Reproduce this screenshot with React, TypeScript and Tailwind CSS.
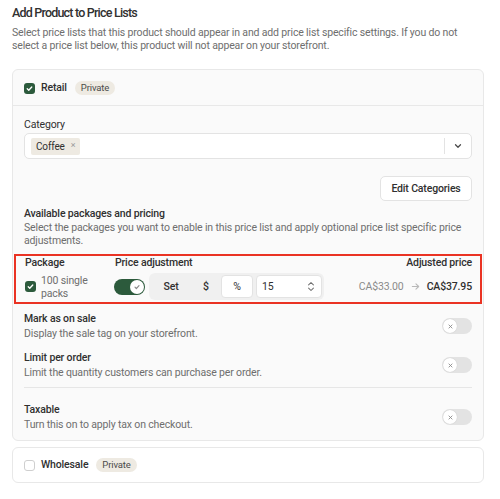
import React from 'react';

function Check({ className = '' }: { className?: string }) {
  return (
    <svg viewBox="0 0 12 12" className={className} fill="none" stroke="currentColor" strokeWidth={1.8} strokeLinecap="round" strokeLinejoin="round">
      <path d="M3 6.3l2 2 4-4.4" />
    </svg>
  );
}

function Checkbox({ checked }: { checked: boolean }) {
  return checked ? (
    <span className="flex h-[11px] w-[11px] shrink-0 items-center justify-center rounded-[3px] bg-[#2c5a3c] text-white">
      <Check className="h-[9px] w-[9px]" />
    </span>
  ) : (
    <span className="h-[11px] w-[11px] shrink-0 rounded-[3px] border border-[#cfcfcf] bg-white" />
  );
}

function Badge({ children }: { children: React.ReactNode }) {
  return (
    <span className="rounded-full bg-[#eeeae2] px-[6px] text-[9.5px] leading-[14px] text-[#4a4a4a]">{children}</span>
  );
}

function OffToggle() {
  return (
    <span className="flex h-[16px] w-[30px] shrink-0 items-center rounded-full bg-[#e3e3e3] p-[1px]">
      <span className="flex h-[14px] w-[14px] items-center justify-center rounded-full bg-white shadow-[0_0_1px_rgba(0,0,0,0.2)]">
        <svg viewBox="0 0 8 8" className="h-[5px] w-[5px]" stroke="#8a8a8a" strokeWidth={1.4} strokeLinecap="round">
          <path d="M1.5 1.5l5 5M6.5 1.5l-5 5" />
        </svg>
      </span>
    </span>
  );
}

function SettingRow({ title, desc, top }: { title: string; desc: string; top: string }) {
  return (
    <div className={`flex items-center justify-between ${top}`}>
      <div>
        <div className="font-medium leading-[13px] text-[#303030]">{title}</div>
        <div className="mt-[2px] leading-[13px] text-[#6e6e6e]">{desc}</div>
      </div>
      <OffToggle />
    </div>
  );
}

export default function App() {
  return (
    <div className="min-h-[499px] bg-white pl-[12px] pr-[16px] pt-[4px] text-[10.5px] tracking-[-0.15px] text-[#303030] [font-family:Roboto,'Noto_Sans',sans-serif]">
      <h2 className="text-[12.5px] font-medium leading-[18px] tracking-[-0.8px] text-[#303030]">Add Product to Price Lists</h2>
      <p className="mt-[4px] leading-[13px] text-[#6e6e6e]">
        Select price lists that this product should appear in and add price list specific settings. If you do not select a price list below, this product will not appear on your storefront.
      </p>

      <div className="mt-[17px] rounded-[6px] border border-[#e8e8e8] bg-[#fafafa]">
        <div className="flex h-[36px] items-center gap-[6px] border-b border-[#e8e8e8] px-[11px] pt-[1px]">
          <Checkbox checked />
          <span className="mr-[2px] font-medium text-[#303030]">Retail</span>
          <Badge>Private</Badge>
        </div>

        <div className="px-[11px] pb-[9px] pt-[12px]">
          <div className="leading-[13px] text-[#303030]">Category</div>
          <div className="mt-[2px] flex h-[26px] items-center rounded-[5px] border border-[#e3e3e3] bg-white pl-[6px]">
            <span className="flex h-[17px] items-center gap-[6px] rounded-[2px] bg-[#eeeae2] px-[5px] text-[10px] text-[#303030]">
              Coffee
              <span className="text-[9px] text-[#9a9a9a]">×</span>
            </span>
            <span className="ml-auto h-[16px] w-px bg-[#e3e3e3]" />
            <span className="flex w-[26px] items-center justify-center">
              <svg viewBox="0 0 12 12" className="h-[10px] w-[10px]" fill="none" stroke="#4a4a4a" strokeWidth={1.5} strokeLinecap="round" strokeLinejoin="round">
                <path d="M3 4.5l3 3 3-3" />
              </svg>
            </span>
          </div>

          <div className="mt-[17px] flex justify-end">
            <button className="h-[25px] w-[92px] rounded-[5px] border border-[#e3e3e3] bg-white font-medium text-[#303030]">
              Edit Categories
            </button>
          </div>

          <div className="mt-[6px] font-medium leading-[13px] text-[#303030]">Available packages and pricing</div>
          <div className="mt-[1px] leading-[13px] text-[#6e6e6e]">
            Select the packages you want to enable in this price list and apply optional price list specific price adjustments.
          </div>

          <div className="-mx-[10px] mt-[7px] border-2 border-[#ea3323] pb-[2px] pl-[9px] pr-[8px]">
            <div className="flex font-medium leading-[13px] text-[#303030]">
              <span className="w-[90px]">Package</span>
              <span>Price adjustment</span>
              <span className="ml-auto">Adjusted price</span>
            </div>
            <div className="mt-[4px] flex h-[27px] items-center">
              <div className="flex w-[89px] items-center gap-[5px]">
                <Checkbox checked />
                <span className="leading-[13px] text-[#6e6e6e]">
                  100 single
                  <br />
                  packs
                </span>
              </div>
              <span className="flex h-[16px] w-[31px] shrink-0 items-center justify-end rounded-full bg-[#2c5a3c] p-[1px]">
                <span className="flex h-[14px] w-[14px] items-center justify-center rounded-full bg-white text-[#8a8a8a]">
                  <Check className="h-[8px] w-[8px]" />
                </span>
              </span>
              <div className="ml-[4px] flex h-[27px] items-center rounded-[6px] bg-[#f0f0f0] p-[2px]">
                <span className="w-[40px] text-center font-medium text-[#303030]">Set</span>
                <span className="w-[30px] text-center font-medium text-[#303030]">$</span>
                <span className="flex h-[23px] w-[32px] items-center justify-center rounded-[4px] border border-[#e3e3e3] bg-white text-[#303030]">%</span>
                <span className="ml-[3px] flex h-[23px] w-[66px] items-center justify-between rounded-[4px] border border-[#e3e3e3] bg-white pl-[5px] pr-[6px] text-[#303030]">
                  15
                  <svg viewBox="0 0 10 14" className="h-[13px] w-[8px]" fill="none" stroke="#6e6e6e" strokeWidth={1.3} strokeLinecap="round" strokeLinejoin="round">
                    <path d="M2 5l3-3 3 3M2 9l3 3 3-3" />
                  </svg>
                </span>
              </div>
              <div className="ml-auto flex items-center gap-[7px]">
                <span className="text-[#8a8a8a]">CA$33.00</span>
                <svg viewBox="0 0 10 10" className="h-[9px] w-[9px]" fill="none" stroke="#b8b8b8" strokeWidth={1.2} strokeLinecap="round" strokeLinejoin="round">
                  <path d="M1.5 5h7M5.5 2l3 3-3 3" />
                </svg>
                <span className="font-medium text-[#303030]">CA$37.95</span>
              </div>
            </div>
          </div>

          <SettingRow top="mt-[8px]" title="Mark as on sale" desc="Display the sale tag on your storefront." />
          <SettingRow top="mt-[11px]" title="Limit per order" desc="Limit the quantity customers can purchase per order." />
          <div className="mt-[8px] border-t border-[#e6e6e6]" />
          <SettingRow top="mt-[15px]" title="Taxable" desc="Turn this on to apply tax on checkout." />
        </div>
      </div>

      <div className="mt-[6px] flex h-[36px] items-center gap-[6px] rounded-[6px] border border-[#e8e8e8] bg-white px-[11px]">
        <Checkbox checked={false} />
        <span className="mr-[2px] font-medium text-[#303030]">Wholesale</span>
        <Badge>Private</Badge>
      </div>
    </div>
  );
}
